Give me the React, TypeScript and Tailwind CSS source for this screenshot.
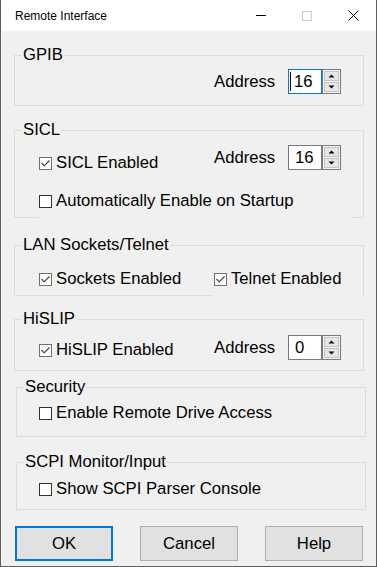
import React from "react";

function Check({ checked, label }: { checked?: boolean; label: string }) {
  return (
    <div className="flex items-center h-[20px] gap-[4px] whitespace-nowrap">
      <span
        className={`w-[13px] h-[13px] border bg-white flex items-center justify-center shrink-0 ${
          checked ? "border-[#707070]" : "border-[#333333]"
        }`}
      >
        {checked && (
          <svg width="11" height="11" viewBox="0 0 11 11">
            <path d="M1.5 5 L4.2 7.8 L9.5 2.5" fill="none" stroke="#3a3a3a" strokeWidth="1.1" />
          </svg>
        )}
      </span>
      <span>{label}</span>
    </div>
  );
}

function Spin({ value, focused }: { value: string; focused?: boolean }) {
  return (
    <div className="flex h-[25px]">
      <div
        className={`w-[34px] h-full bg-white border flex items-center ${
          focused ? "border-[#0078d7]" : "border-[#7a7a7a]"
        }`}
      >
        {focused && <span className="w-px h-[19px] bg-black ml-[1px]" />}
        <span className={focused ? "ml-[3px]" : "ml-[6px]"}>{value}</span>
      </div>
      <div className="w-[19px] h-full border border-[#7a7a7a] bg-[#f4f4f4] flex flex-col p-px gap-px">
        <div className="flex-1 bg-[#e6e6e6] border border-[#c4c4c4] flex items-center justify-center">
          <svg width="7" height="4" viewBox="0 0 7 4">
            <path d="M0.5 3.5 L3.5 0.5 L6.5 3.5 Z" fill="#000" />
          </svg>
        </div>
        <div className="flex-1 bg-[#e6e6e6] border border-[#c4c4c4] flex items-center justify-center">
          <svg width="7" height="4" viewBox="0 0 7 4">
            <path d="M0.5 0.5 L3.5 3.5 L6.5 0.5 Z" fill="#000" />
          </svg>
        </div>
      </div>
    </div>
  );
}

function Address({ value, focused }: { value: string; focused?: boolean }) {
  return (
    <div className="flex items-center">
      <span className="w-[74px]">Address</span>
      <Spin value={value} focused={focused} />
    </div>
  );
}

function Group({
  title,
  className,
  children,
}: {
  title: string;
  className: string;
  children: React.ReactNode;
}) {
  return (
    <fieldset className={`border border-[#dcdcdc] w-[350px] ${className}`}>
      <legend className="ml-[7px] px-[1px] leading-[20px]">{title}</legend>
      {children}
    </fieldset>
  );
}

export default function App() {
  return (
    <div className="w-[377px] h-[567px] bg-[#f0f0f0] border-x border-b border-[#5f5f5f] flex flex-col font-['Liberation_Sans',Arial,sans-serif] text-[16.7px] leading-[20px] text-black overflow-hidden">
      {/* title bar */}
      <div className="h-[31px] bg-white flex items-center shrink-0">
        <span className="pl-[14px] text-[12px]">Remote Interface</span>
        <div className="ml-auto flex h-full">
          <div className="w-[46px] h-full flex items-center justify-center">
            <span className="w-[10px] h-px bg-black" />
          </div>
          <div className="w-[46px] h-full flex items-center justify-center">
            <span className="w-[10px] h-[10px] border border-[#cccccc]" />
          </div>
          <div className="w-[46px] h-full flex items-center justify-center">
            <svg width="11" height="11" viewBox="0 0 11 11">
              <path d="M0.5 0.5 L10.5 10.5 M10.5 0.5 L0.5 10.5" stroke="#000" strokeWidth="1" />
            </svg>
          </div>
        </div>
      </div>

      <Group title="GPIB" className="ml-[13px] mt-[14px] h-[61px]">
        <div className="pl-[199px] pt-[4px]">
          <Address value="16" focused />
        </div>
      </Group>

      <Group title="SICL" className="ml-[13px] mt-[14px] h-[98px]">
        <div className="pl-[24px] pt-[5px] flex items-start">
          <div className="w-[175px] mt-[8px]">
            <Check checked label="SICL Enabled" />
          </div>
          <Address value="16" />
        </div>
        <div className="ml-[24px] mt-[18px] w-[313px] h-[27px] bg-[#f0f0f0] relative">
          <Check label="Automatically Enable on Startup" />
        </div>
      </Group>

      <Group title="LAN Sockets/Telnet" className="ml-[13px] mt-[17px] h-[61px]">
        <div className="pl-[24px] pt-[14px] flex items-start">
          <div className="w-[174px]">
            <Check checked label="Sockets Enabled" />
          </div>
          <div className="w-[149px] h-[27px] pl-px bg-[#f0f0f0] relative">
            <Check checked label="Telnet Enabled" />
          </div>
        </div>
      </Group>

      <Group title="HiSLIP" className="ml-[13px] mt-[13px] h-[62px]">
        <div className="pl-[24px] pt-[6px] flex items-start">
          <div className="w-[175px] mt-[5px]">
            <Check checked label="HiSLIP Enabled" />
          </div>
          <Address value="0" />
        </div>
      </Group>

      <Group title="Security" className="ml-[15px] mt-[6px] h-[60px]">
        <div className="pl-[22px] pt-[6px]">
          <Check label="Enable Remote Drive Access" />
        </div>
      </Group>

      <Group title="SCPI Monitor/Input" className="ml-[15px] mt-[15px] h-[58px]">
        <div className="pl-[22px] pt-[7px]">
          <Check label="Show SCPI Parser Console" />
        </div>
      </Group>

      <div className="ml-[14px] mt-[16px] flex gap-[27px]">
        <button className="w-[98px] h-[35px] bg-[#e1e1e1] border-2 border-[#0078d7] flex items-center justify-center">
          OK
        </button>
        <button className="w-[98px] h-[35px] bg-[#e1e1e1] border border-[#adadad] flex items-center justify-center">
          Cancel
        </button>
        <button className="w-[98px] h-[35px] bg-[#e1e1e1] border border-[#adadad] flex items-center justify-center">
          Help
        </button>
      </div>
    </div>
  );
}
